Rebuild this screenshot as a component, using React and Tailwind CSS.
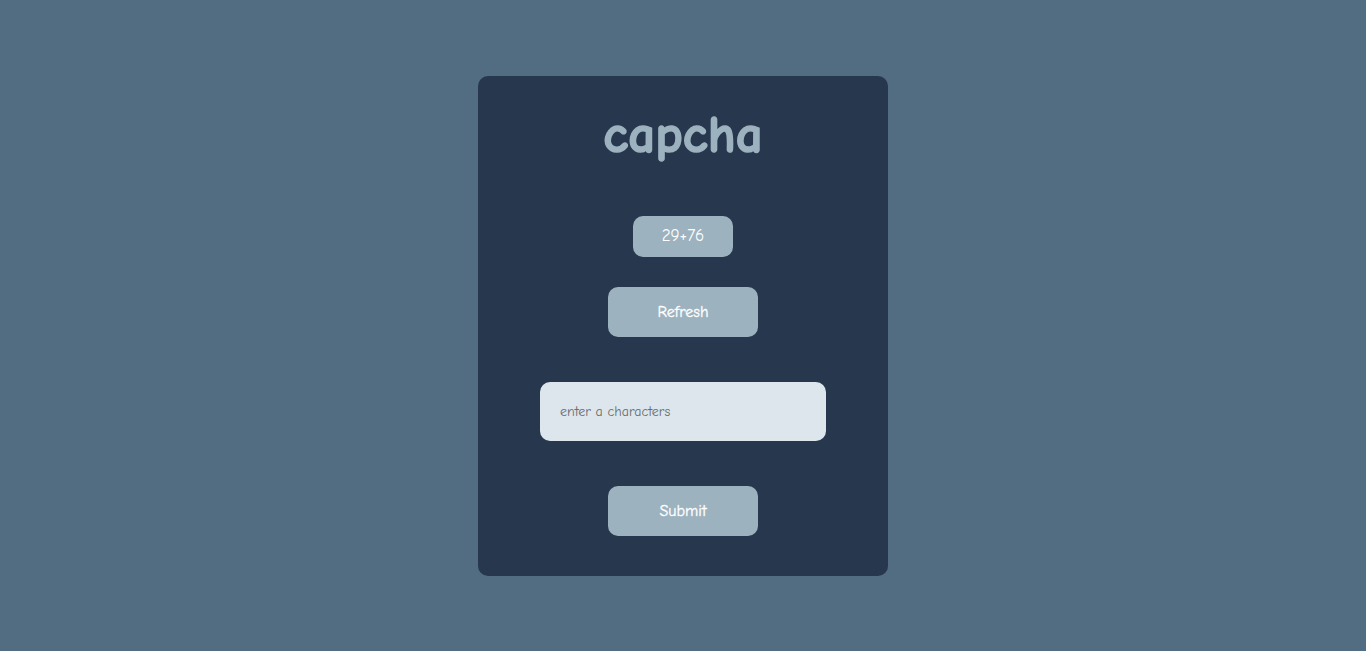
import React, { useState } from "react";

function makeCaptcha() {
  return "29+76";
}

export default function App() {
  const [captcha, setCaptcha] = useState(makeCaptcha());
  const [value, setValue] = useState("");

  return (
    <div className="min-h-screen w-full bg-[#526d82] flex items-center justify-center font-['Comic_Sans_MS','Comic_Neue',cursive]">
      <div className="w-[410px] h-[500px] bg-[#27374d] rounded-[10px] flex flex-col items-center pt-[28px]">
        <h1 className="text-[53px] leading-[62px] font-bold text-[#9db2bf] [-webkit-text-stroke:1.5px_#9db2bf]">capcha</h1>

        <div className="mt-[50px] w-[100px] h-[41px] rounded-[10px] bg-[#9db2bf] text-white text-[17px] flex items-center justify-center">
          {captcha}
        </div>

        <button
          className="mt-[30px] w-[150px] h-[50px] rounded-[10px] bg-[#9db2bf] text-white text-[16px] [-webkit-text-stroke:0.3px_white]"
          onClick={() => setCaptcha(makeCaptcha())}
        >
          Refresh
        </button>

        <input
          className="mt-[45px] w-[286px] h-[59px] rounded-[10px] bg-[#dde6ed] px-5 text-[14px] text-[#27374d] placeholder:text-[#6b6b6b] outline-none"
          placeholder="enter a characters"
          value={value}
          onChange={e => setValue(e.target.value)}
        />

        <button className="mt-[45px] w-[150px] h-[50px] rounded-[10px] bg-[#9db2bf] text-white text-[16px] [-webkit-text-stroke:0.3px_white]">
          Submit
        </button>
      </div>
    </div>
  );
}
